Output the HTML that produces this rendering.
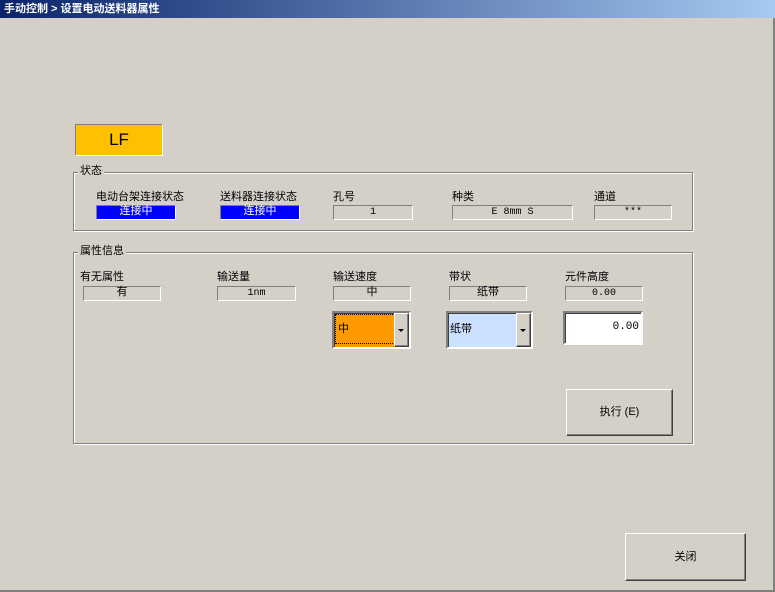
<!DOCTYPE html>
<html><head><meta charset="utf-8"><style>
*{margin:0;padding:0;box-sizing:border-box}
body{width:775px;height:592px;background:#d4d0c8;position:relative;overflow:hidden;font-family:"Liberation Sans","WenQuanYi Zen Hei","Noto Sans CJK SC",sans-serif;font-size:11px;color:#000}
.a{position:absolute}
.title{left:0;top:0;width:775px;height:18px;background:linear-gradient(90deg,#0a246a,#a6caf0);color:#fff;font-weight:bold;font-size:11px;line-height:18px;padding-left:4px}
.grp{border:1px solid #808080;box-shadow:inset 1px 1px 0 #fff,1px 1px 0 #fff}
.gl{background:#d4d0c8;padding:0 2px;line-height:12px}
.f{border:1px solid;border-color:#808080 #fff #fff #808080;text-align:center;line-height:13px;font-size:10px;font-family:"Liberation Mono","WenQuanYi Zen Hei",monospace}
.blue{background:#0000ff;color:#fff}
.btn{border:1px solid;border-color:#fff #404040 #404040 #fff;box-shadow:inset -1px -1px 0 #808080;text-align:center}
.sunk{border:2px solid;border-color:#808080 #fff #fff #808080;box-shadow:inset 1px 1px 0 #404040}
</style></head><body>
<div class="a title">手动控制 &gt; 设置电动送料器属性</div>
<div class="a" style="left:773px;top:18px;width:2px;height:574px;background:#808080"></div>
<div class="a" style="left:0;top:590px;width:775px;height:2px;background:#808080"></div>
<div class="a" style="left:75px;top:124px;width:88px;height:32px;background:#ffc000;border-top:1px solid #808080;border-left:1px solid #808080;border-right:1px solid #fff;border-bottom:1px solid #fff;text-align:center;line-height:30px;font-size:17px">LF</div>

<div class="a grp" style="left:73px;top:172px;width:620px;height:59px"></div>
<div class="a gl" style="left:78px;top:165px">状态</div>
<div class="a" style="left:96px;top:188px">电动台架连接状态</div>
<div class="a" style="left:220px;top:188px">送料器连接状态</div>
<div class="a" style="left:333px;top:188px">孔号</div>
<div class="a" style="left:452px;top:188px">种类</div>
<div class="a" style="left:594px;top:188px">通道</div>
<div class="a f blue" style="left:96px;top:205px;width:80px;height:15px;font-size:11px">连接中</div>
<div class="a f blue" style="left:220px;top:205px;width:80px;height:15px;font-size:11px">连接中</div>
<div class="a f" style="left:333px;top:205px;width:80px;height:15px">1</div>
<div class="a f" style="left:452px;top:205px;width:121px;height:15px">E 8mm S</div>
<div class="a f" style="left:594px;top:205px;width:78px;height:15px">***</div>

<div class="a grp" style="left:73px;top:252px;width:620px;height:192px"></div>
<div class="a gl" style="left:78px;top:245px">属性信息</div>
<div class="a" style="left:80px;top:268px">有无属性</div>
<div class="a" style="left:217px;top:268px">输送量</div>
<div class="a" style="left:333px;top:268px">输送速度</div>
<div class="a" style="left:449px;top:268px">带状</div>
<div class="a" style="left:565px;top:268px">元件高度</div>
<div class="a f" style="left:83px;top:286px;width:78px;height:15px;font-size:11px">有</div>
<div class="a f" style="left:217px;top:286px;width:79px;height:15px">1nm</div>
<div class="a f" style="left:333px;top:286px;width:78px;height:15px;font-size:11px">中</div>
<div class="a f" style="left:449px;top:286px;width:78px;height:15px;font-size:11px">纸带</div>
<div class="a f" style="left:565px;top:286px;width:78px;height:15px">0.00</div>

<div class="a sunk" style="left:332px;top:311px;width:79px;height:38px;background:#ff9900">
 <div class="a" style="left:1px;top:1px;width:72px;height:30px;border:1px dotted #000;line-height:28px;padding-left:2px">中</div>
 <div class="a btn" style="right:0;top:0;width:15px;height:34px;background:#d4d0c8"><div class="a" style="left:3px;top:15px;border:3px solid transparent;border-top:3px solid #000;border-bottom:0"></div></div>
</div>
<div class="a sunk" style="left:446px;top:311px;width:87px;height:38px;background:#cce0ff">
 <div class="a" style="left:2px;top:1px;line-height:30px">纸带</div>
 <div class="a btn" style="right:0;top:0;width:15px;height:34px;background:#d4d0c8"><div class="a" style="left:3px;top:15px;border:3px solid transparent;border-top:3px solid #000;border-bottom:0"></div></div>
</div>
<div class="a sunk" style="left:563px;top:311px;width:80px;height:34px;background:#fff;text-align:right;padding-right:2px;line-height:28px;font-family:'Liberation Mono',monospace">0.00</div>

<div class="a btn" style="left:566px;top:389px;width:107px;height:47px;line-height:45px">执行 (E)</div>
<div class="a btn" style="left:625px;top:533px;width:121px;height:48px;line-height:46px">关闭</div>
</body></html>
